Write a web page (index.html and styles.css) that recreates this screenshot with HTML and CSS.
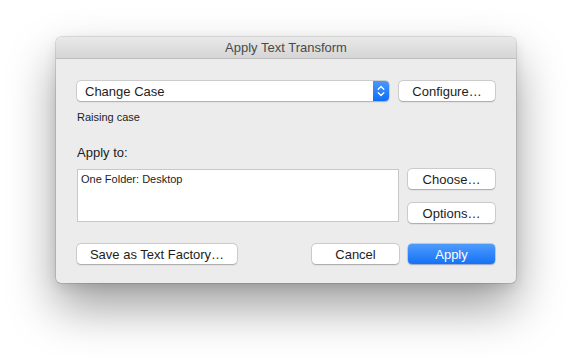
FILE: index.html
```html
<!DOCTYPE html>
<html lang="en">
<head>
    <meta charset="UTF-8">
    <meta name="viewport" content="width=device-width, initial-scale=1.0">
    <title>Apply Text Transform</title>
    <link rel="stylesheet" href="styles.css">
</head>
<body>
    <div class="window">
        <div class="titlebar">Apply Text Transform</div>
        <div class="content">
            <div class="row">
                <div class="popup">
                    <span class="popup-label">Change Case</span>
                    <span class="stepper">
                        <svg width="8" height="12" viewBox="0 0 8 12">
                            <path d="M1.2 4.2 L4 1.5 L6.8 4.2 M1.2 7.8 L4 10.5 L6.8 7.8" fill="none" stroke="#fff" stroke-width="1.3" stroke-linecap="round" stroke-linejoin="round"/>
                        </svg>
                    </span>
                </div>
                <button class="btn configure">Configure…</button>
            </div>
            <div class="hint">Raising case</div>

            <div class="section-label">Apply to:</div>
            <div class="row target-row">
                <div class="target-box">One Folder: Desktop</div>
                <div class="side-buttons">
                    <button class="btn">Choose…</button>
                    <button class="btn">Options…</button>
                </div>
            </div>

            <div class="row footer">
                <button class="btn save">Save as Text Factory…</button>
                <div class="spacer"></div>
                <button class="btn">Cancel</button>
                <button class="btn primary">Apply</button>
            </div>
        </div>
    </div>
</body>
</html>
```

FILE: styles.css
```css
:root {
    --window-bg: #ececec;
    --text-color: #1d1d1d;
    --border-color: #c4c4c4;
    --accent: #1a7cf8;
}

html {
    height: 100%;
    background-color: #ffffff;
}

body {
    font-family: 'Liberation Sans', Arial, sans-serif;
    margin: 0;
    padding: 37px 0 0 56px;
    height: 100%;
    box-sizing: border-box;
    background-color: #ffffff;
    color: var(--text-color);
    font-size: 13px;
}

.window {
    width: 460px;
    height: 246px;
    box-sizing: border-box;
    background-color: var(--window-bg);
    border-radius: 5px;
    box-shadow: 0 0 0 0.5px rgba(0,0,0,0.22), 0 24px 48px rgba(0,0,0,0.38), 0 4px 12px rgba(0,0,0,0.1);
    display: flex;
    flex-direction: column;
    overflow: hidden;
}

.titlebar {
    height: 22px;
    box-sizing: border-box;
    background: linear-gradient(#e9e9e9, #d5d5d5);
    border-bottom: 1px solid #bdbdbd;
    text-align: center;
    line-height: 22px;
    font-size: 13px;
    color: #4a4a4a;
}

.content {
    padding: 22px 21px 21px;
    display: flex;
    flex-direction: column;
}

.row {
    display: flex;
    align-items: center;
}

.popup {
    flex: 1;
    height: 20px;
    display: flex;
    align-items: center;
    background-color: white;
    border-radius: 4px;
    box-shadow: 0 0 0 0.5px rgba(0,0,0,0.2), 0 0.5px 1.5px rgba(0,0,0,0.2);
    margin-right: 10px;
}

.popup-label {
    flex: 1;
    padding-left: 8px;
}

.stepper {
    width: 16px;
    height: 20px;
    background: linear-gradient(#4a98fb, #0f6ef5);
    border-radius: 0 4px 4px 0;
    display: flex;
    align-items: center;
    justify-content: center;
}

.btn {
    font-family: inherit;
    font-size: 13px;
    color: var(--text-color);
    height: 20px;
    width: 87px;
    padding: 0;
    background-color: white;
    border: none;
    border-radius: 4px;
    box-shadow: 0 0 0 0.5px rgba(0,0,0,0.2), 0 0.5px 1.5px rgba(0,0,0,0.22);
    cursor: pointer;
}

.configure {
    width: 96px;
}

.hint {
    font-size: 11px;
    margin-top: 9px;
    line-height: 14px;
}

.section-label {
    margin-top: 21px;
    line-height: 16px;
}

.target-row {
    margin-top: 8px;
    align-items: flex-start;
}

.target-box {
    flex: 1;
    height: 53px;
    box-sizing: border-box;
    background-color: white;
    border: 1px solid #c8c8c8;
    font-size: 11px;
    padding: 3px 3px;
    margin-right: 9px;
}

.side-buttons {
    display: flex;
    flex-direction: column;
    gap: 14px;
}

.footer {
    margin-top: 21px;
    gap: 9px;
}

.save {
    width: 160px;
}

.spacer {
    flex: 1;
}

.primary {
    background: linear-gradient(#4d9bfc, #1572f6);
    color: white;
    box-shadow: 0 0 0 0.5px rgba(0,60,200,0.35), 0 0.5px 1.5px rgba(0,0,0,0.2);
}
```
